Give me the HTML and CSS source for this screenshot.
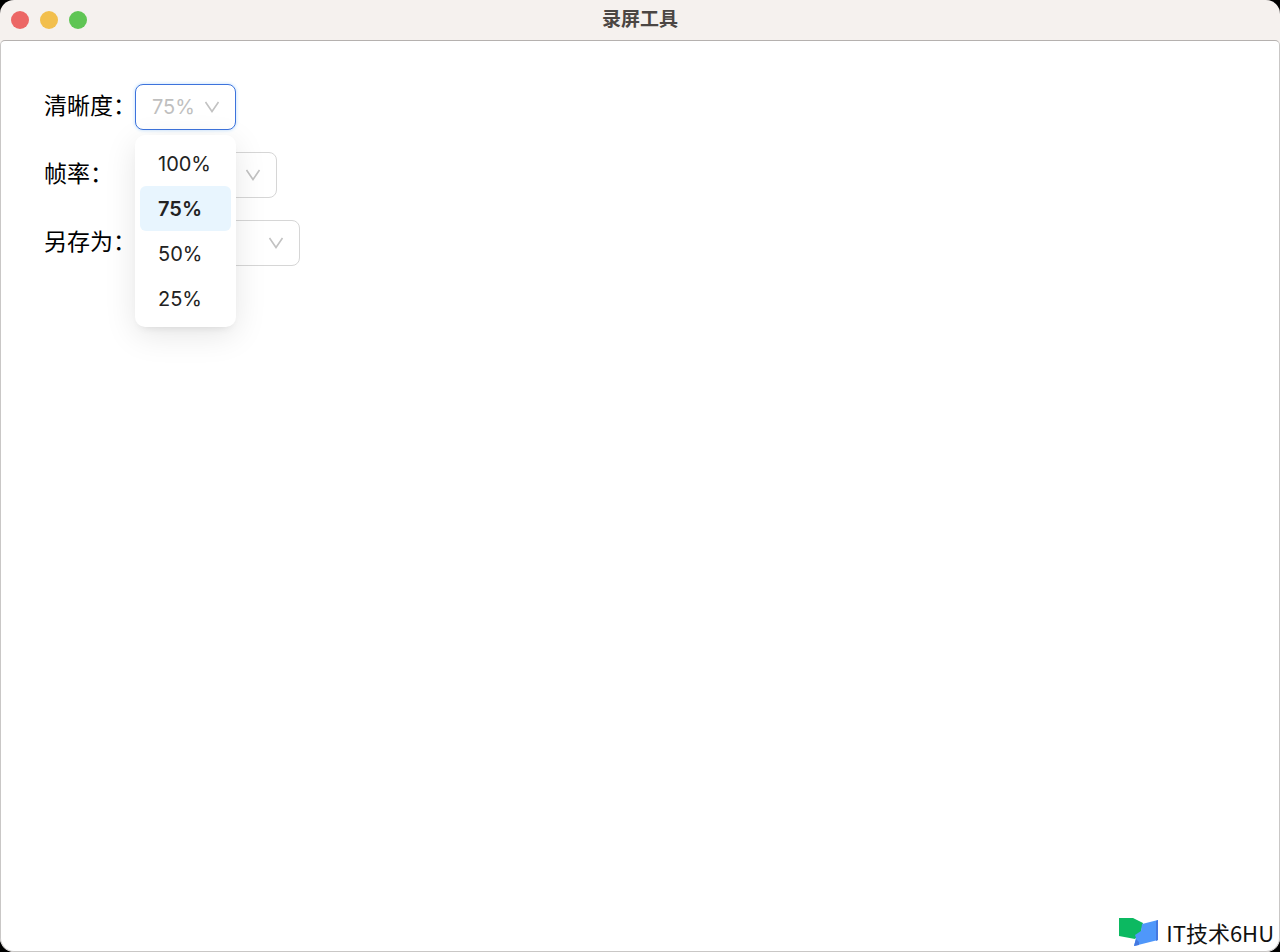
FILE: index.html
```html
<!DOCTYPE html>
<html lang="zh-CN">
<head>
<meta charset="utf-8">
<title>录屏工具</title>
<link rel="stylesheet" href="styles.css">
</head>
<body>
<div class="window">
  <header class="titlebar">
    <div class="controls">
      <button class="dot close" aria-label="关闭"></button>
      <button class="dot minimize" aria-label="最小化"></button>
      <button class="dot maximize" aria-label="最大化"></button>
    </div>
    <h1 class="title">录屏工具</h1>
  </header>
  <main class="content">
    <form class="settings">
      <label class="label" for="quality">清晰度：</label>
      <div class="field quality">
        <select class="select active" id="quality">
          <option>100%</option>
          <option selected>75%</option>
          <option>50%</option>
          <option>25%</option>
        </select>
        <svg class="arrow" viewBox="0 0 16 14" aria-hidden="true"><path d="M1.5 2 8 11.5 14.5 2"/></svg>
        <div class="menu" role="listbox" aria-label="清晰度">
          <button class="option" type="button" role="option">100%</button>
          <button class="option selected" type="button" role="option" aria-selected="true">75%</button>
          <button class="option" type="button" role="option">50%</button>
          <button class="option" type="button" role="option">25%</button>
        </div>
      </div>
      <label class="label" for="rate">帧率：</label>
      <div class="field rate">
        <select class="select" id="rate"><option></option></select>
        <svg class="arrow" viewBox="0 0 16 14" aria-hidden="true"><path d="M1.5 2 8 11.5 14.5 2"/></svg>
      </div>
      <label class="label" for="format">另存为：</label>
      <div class="field format">
        <select class="select" id="format"><option></option></select>
        <svg class="arrow" viewBox="0 0 16 14" aria-hidden="true"><path d="M1.5 2 8 11.5 14.5 2"/></svg>
      </div>
    </form>
    <div class="brand">
      <svg class="brand-logo" viewBox="0 0 40 30" aria-hidden="true">
        <path d="M0 1h14l10 5-2 9-6 7-16-3z" fill="#0cb961"/>
        <path d="M23 7l16-4v20l-24 6 2-8-1-3 6-4z" fill="#4f97fa"/>
        <path d="M37 4l2-1v20l-2 1zM15 29l2-7 3 3v3z" fill="#4478e0"/>
      </svg>
      <span>IT技术6HU</span>
    </div>
  </main>
</div>
</body>
</html>
```
FILE: styles.css
```css
* {
  box-sizing: border-box;
}

body {
  margin: 0;
  background: #000;
  font-family: Inter, "Noto Sans CJK SC", sans-serif;
}

.window {
  display: flex;
  flex-direction: column;
  min-height: 100vh;
  overflow: hidden;
  border-radius: 14px;
  background: #f5f1ee;
}

.titlebar {
  display: grid;
  grid-template-columns: 1fr auto 1fr;
  align-items: center;
  height: 40px;
  padding: 0 11px;
}

.controls {
  display: flex;
  gap: 11px;
}

.dot {
  width: 18px;
  height: 18px;
  padding: 0;
  border: 0;
  border-radius: 50%;
}

.close {
  background: #ec6765;
}

.minimize {
  background: #f2bf4d;
}

.maximize {
  background: #5fc554;
}

.title {
  margin: 0;
  color: #4b4643;
  font-size: 19px;
  font-weight: 700;
  line-height: 28px;
}

.content {
  display: flex;
  flex: 1;
  flex-direction: column;
  justify-content: space-between;
  padding: 43px 5px 3px 43px;
  border: 1px solid #c9c7c6;
  border-top-color: #b5b1af;
  border-radius: 5px 5px 14px 14px;
  background: #fff;
}

.settings {
  display: grid;
  grid-template-columns: 91px 1fr;
  align-items: start;
  row-gap: 22px;
}

.label {
  color: #000;
  font-family: "Noto Sans CJK SC", sans-serif;
  font-size: 23px;
  line-height: 40px;
  white-space: nowrap;
}

.field {
  position: relative;
  height: 46px;
}

.quality {
  width: 101px;
}

.rate {
  width: 142px;
}

.format {
  width: 165px;
}

.select {
  width: 100%;
  height: 100%;
  padding: 0 16px;
  appearance: none;
  border: 1px solid #d6d6d6;
  border-radius: 8px;
  background: #fff;
  color: #bfbfbf;
  font: 20px/30px Inter, sans-serif;
}

.select.active {
  border-color: #3d73dc;
  box-shadow: 0 0 3px 1px #d5eaff;
}

.arrow {
  position: absolute;
  top: 16px;
  right: 16px;
  width: 16px;
  height: 14px;
  fill: none;
  stroke: #c2c2c2;
  stroke-width: 1.6;
  pointer-events: none;
}

.menu {
  position: absolute;
  z-index: 1;
  top: 51px;
  left: 0;
  width: 100%;
  padding: 6px 5px;
  border-radius: 10px;
  background: #fff;
  box-shadow: 0 8px 32px rgba(0, 0, 0, 0.1), 0 5px 10px -6px rgba(0, 0, 0, 0.14);
}

.option {
  display: block;
  width: 100%;
  height: 45px;
  padding: 0 18px;
  border: 0;
  border-radius: 6px;
  background: transparent;
  color: #222;
  font: 20px/30px Inter, sans-serif;
  text-align: left;
}

.option.selected {
  background: #e8f5fe;
  font-weight: 600;
}

.brand {
  display: flex;
  align-items: center;
  align-self: flex-end;
  gap: 7px;
  color: #111;
  font: 22px/32px "Noto Sans CJK SC", sans-serif;
}

.brand-logo {
  width: 40px;
  height: 30px;
}
```
